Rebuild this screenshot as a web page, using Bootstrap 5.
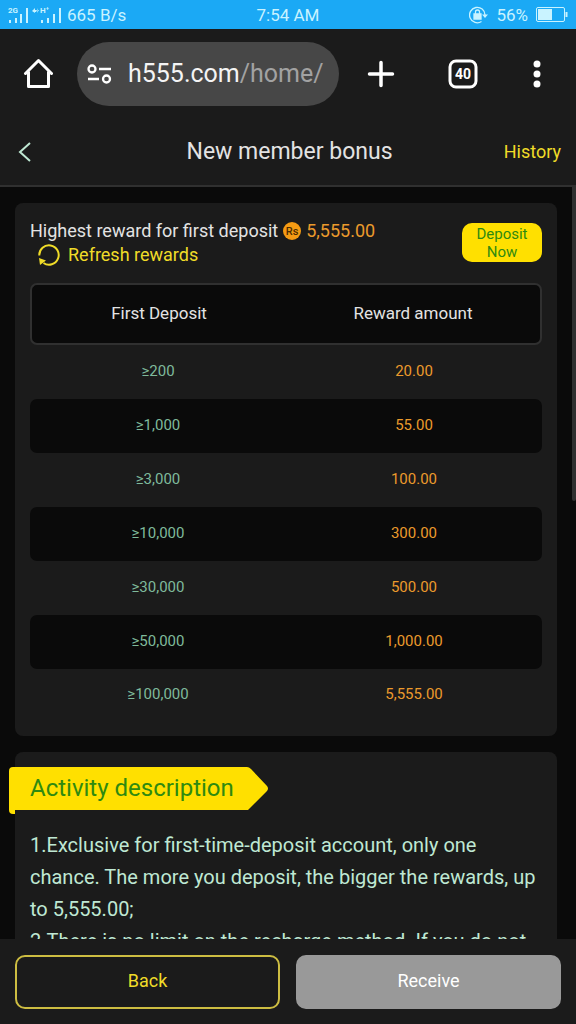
<!DOCTYPE html>
<html lang="en">
<head>
<meta charset="utf-8">
<meta name="viewport" content="width=device-width, initial-scale=1">
<title>New member bonus</title>
<link href="https://cdn.jsdelivr.net/npm/bootstrap@5.3.0/dist/css/bootstrap.min.css" rel="stylesheet">
<style>
  body { font-family: Roboto, "Noto Sans", sans-serif; background: #0a0a0a; color: #e3e3e3; font-size: 18px; line-height: 24px; }
  a, button { color: inherit; text-decoration: none; }
  .plain-btn { background: none; border: 0; padding: 0; display: flex; }
  svg { display: block; flex: none; }
  .panel { background: #1b1b1b; }
  .status-bar { background: #1ba9f5; color: #c9f3ff; font-size: 17px; height: 29px; padding: 0 8px; }
  .status-bar > div { flex: 1 1 0; }
  .browser-bar { height: 89px; padding: 0 33px 0 23px; color: #fff; }
  .address-pill { background: #474747; border: 0; border-radius: 32px; height: 64px; flex: 0 0 262px; font-size: 25px; padding: 0 10px; color: #f4f4f4; white-space: nowrap; }
  .address-pill .path { color: #a2a2a2; }
  .browser-actions { flex: 1; padding-left: 28px; }
  .page-head { height: 69px; border-bottom: 2px solid #303030; padding: 0 15px 0 18px; }
  .page-head > * { flex: 1 1 0; }
  .page-head h1 { font-size: 23px; line-height: 28px; flex: 0 0 auto; font-weight: 400; }
  .yellow { color: #f0dc28; }
  .scroll-area { overflow-y: auto; scrollbar-width: none; padding: 16px 19px 0 15px; }
  .scroll-area::-webkit-scrollbar { display: none; }
  .scroll-thumb { position: absolute; top: 0; right: 0; width: 4px; height: 314px; background: #303030; border-radius: 0 0 2px 2px; }
  .box { background: #1b1b1b; border-radius: 8px; padding: 16px 15px; }
  .orange { color: #eb9a2c; }
  .reward-line { gap: 5px; }
  .deposit-btn { background: #ffe000; color: #2f8a10; border: 0; border-radius: 10px; width: 80px; height: 39px; font-size: 15px; line-height: 18px; padding: 0 8px; }
  .reward-table { border-collapse: separate; border-spacing: 0; table-layout: fixed; font-size: 15px; text-align: center; }
  .reward-table th { font-weight: 400; font-size: 17px; height: 62px; padding: 0 0 3px; background: #0a0a0a; border: solid #303030; border-width: 2px 0; }
  .reward-table th:first-child { border-left-width: 2px; }
  .reward-table th:last-child { border-right-width: 2px; }
  .reward-table td { height: 54px; padding: 0 0 2px; }
  .reward-table tbody tr:nth-child(even) td { background: #0a0a0a; }
  .reward-table td:first-child { color: #7fba9b; }
  .reward-table td:last-child { color: #eb9a2c; }
  .reward-table tbody tr:last-child td { height: 51px; }
  .reward-table tr > :first-child { border-radius: 7px 0 0 7px; }
  .reward-table tr > :last-child { border-radius: 0 7px 7px 0; }
  .ribbon { position: relative; z-index: 0; width: 260px; height: 44px; margin: -1px 0 0 -21px; padding-left: 21px; font-size: 24px; line-height: 42px; font-weight: 400; color: #2f8a10; white-space: nowrap; }
  .ribbon svg { position: absolute; left: 0; top: 0; z-index: -1; }
  .terms { color: #bfe8d3; font-size: 20px; line-height: 32px; padding-top: 18px; }
  .footer-bar { padding: 16px 15px 15px; }
  .footer-bar .btn { height: 54px; border-radius: 10px; font-size: 18px; border-width: 2px; padding: 0 0 4px; }
  .btn-back, .btn-back:hover { color: #f0dc28; border-color: #cdbd42; }
  .btn-receive, .btn-receive:hover { background: #999; border-color: #999; color: #fff; }
</style>
</head>
<body class="vh-100 d-flex flex-column overflow-hidden">
  <div class="status-bar d-flex align-items-center flex-shrink-0">
    <div class="d-flex align-items-center gap-1">
      <svg width="55" height="18" viewBox="0 0 55 18" fill="currentColor">
        <text x="0" y="7" font-size="8" font-weight="700">2G</text>
        <path d="M1 14h2v3H1zM7 12h2v5H7zM12 8h2v9h-2zM18 2h2v15h-2z"/>
        <path d="M24 5l3-3v2h2l-1 2h-1v1zM30 2l-1 2h2l-2 3"/>
        <text x="32" y="7" font-size="8" font-weight="700">H⁺</text>
        <path d="M33 14h2v3h-2zM39 12h2v5h-2zM45 8h2v9h-2zM51 2h2v15h-2z"/>
      </svg>
      <span>665 B/s</span>
    </div>
    <span>7:54 AM</span>
    <div class="d-flex align-items-center justify-content-end gap-2">
      <svg width="19" height="18" viewBox="0 0 19 18" fill="none" stroke="currentColor" stroke-width="1.3">
        <path d="M12.500 15.500A7.700 7.700 0 1 1 16 9"/><path d="M13 8.500h6L16 12z" fill="currentColor" stroke="none"/>
        <path d="M5 8h7v5H5z" fill="currentColor"/><path d="M6.500 8V6a2 2 0 0 1 4 0v2"/>
      </svg>
      <span>56%</span>
      <svg width="32" height="16" viewBox="0 0 32 16" fill="none" stroke="currentColor"><rect x=".5" y=".5" width="28" height="14" rx="1.500"/><path d="M2 2h14v11H2z" fill="currentColor" stroke="none"/><path d="M30.500 5v5" stroke-width="2"/></svg>
    </div>
  </div>

  <nav class="browser-bar panel d-flex align-items-center flex-shrink-0" aria-label="Browser">
    <button class="plain-btn me-4" type="button" aria-label="Home">
      <svg width="30" height="31" viewBox="0 0 30 31" fill="none" stroke="#fff" stroke-width="3" stroke-linejoin="round" stroke-linecap="round"><path d="M2.500 15.500L15.500 2.500L28.500 15.500M5.500 14V28.500H25.500V14"/></svg>
    </button>
    <button class="address-pill d-flex align-items-center" type="button">
      <svg width="25" height="20" viewBox="0 0 25 20" fill="none" stroke="#fff" stroke-width="2.300"><circle cx="5" cy="5" r="3.500"/><path d="M12 5h12M1 15h11"/><circle cx="19.500" cy="15" r="3.500"/></svg>
      <span class="ms-3">h555.com<span class="path">/home/</span></span>
    </button>
    <div class="browser-actions d-flex align-items-center justify-content-between">
      <button class="plain-btn" type="button" aria-label="New tab">
        <svg width="28" height="28" viewBox="0 0 28 28" stroke="#fff" stroke-width="3.500" stroke-linecap="round"><path d="M14 2.500v23M2.500 14h23"/></svg>
      </button>
      <button class="plain-btn" type="button" aria-label="40 open tabs">
        <svg width="30" height="30" viewBox="0 0 30 30"><rect x="2" y="2" width="26" height="26" rx="6" fill="none" stroke="#fff" stroke-width="3"/><text x="15" y="20" text-anchor="middle" font-size="14" font-weight="700" fill="#fff">40</text></svg>
      </button>
      <button class="plain-btn" type="button" aria-label="Menu">
        <svg width="12" height="28" viewBox="0 0 12 28" fill="#fff"><circle cx="6" cy="4" r="3.500"/><circle cx="6" cy="14" r="3.500"/><circle cx="6" cy="24" r="3.500"/></svg>
      </button>
    </div>
  </nav>

  <header class="page-head panel d-flex align-items-center flex-shrink-0">
    <div><a class="d-flex" href="#" aria-label="Go back">
      <svg width="14" height="20" viewBox="0 0 14 20" fill="none" stroke="#bfe8d3" stroke-width="2"><path d="M12 1L2 10l10 9"/></svg>
    </a></div>
    <h1 class="m-0">New member bonus</h1>
    <div class="text-end"><a class="yellow" href="#">History</a></div>
  </header>

  <div class="position-relative d-flex flex-column flex-grow-1 overflow-hidden">
    <main class="scroll-area flex-grow-1">
      <section class="box mb-3">
        <div class="d-flex justify-content-between align-items-start">
          <div>
            <div class="reward-line d-flex align-items-center">
              <span>Highest reward for first deposit</span>
              <svg width="18" height="18" viewBox="0 0 18 18"><circle cx="9" cy="9" r="9" fill="#f59b13"/><text x="9" y="13" text-anchor="middle" font-size="11" font-weight="500" fill="#4b2b00">Rs</text></svg>
              <span class="orange">5,555.00</span>
            </div>
            <button class="plain-btn yellow align-items-center gap-2 ms-2" type="button">
              <svg width="22" height="22" viewBox="0 0 22 22" fill="none" stroke="currentColor" stroke-width="2"><path d="M1.300 11.500A9.700 9.700 0 1 1 5.500 19"/><path d="M1 14l7 2.500L2 21z" fill="currentColor" stroke="none"/></svg>
              Refresh rewards
            </button>
          </div>
          <button class="deposit-btn mt-1" type="button">Deposit Now</button>
        </div>
        <table class="reward-table w-100 mt-3">
          <thead><tr><th scope="col">First Deposit</th><th scope="col">Reward amount</th></tr></thead>
          <tbody>
            <tr><td>≥200</td><td>20.00</td></tr>
            <tr><td>≥1,000</td><td>55.00</td></tr>
            <tr><td>≥3,000</td><td>100.00</td></tr>
            <tr><td>≥10,000</td><td>300.00</td></tr>
            <tr><td>≥30,000</td><td>500.00</td></tr>
            <tr><td>≥50,000</td><td>1,000.00</td></tr>
            <tr><td>≥100,000</td><td>5,555.00</td></tr>
          </tbody>
        </table>
      </section>
      <section class="box">
        <h2 class="ribbon mb-0">
          <svg width="260" height="47" viewBox="0 0 260 47" fill="#ffe000" aria-hidden="true"><path d="M4 0H238Q240 0 242 2L258 19Q260 21.500 258 24L239 43H6V47H4Q0 47 0 43V4Q0 0 4 0Z"/></svg>
          Activity description
        </h2>
        <div class="terms">
          1.Exclusive for first-time-deposit account, only one chance. The more you deposit, the bigger the rewards, up to 5,555.00;<br>
          2.There is no limit on the recharge method. If you do not
        </div>
      </section>
    </main>
    <div class="scroll-thumb"></div>
  </div>

  <footer class="footer-bar panel d-flex gap-3 flex-shrink-0">
    <button class="btn btn-back flex-fill w-50" type="button">Back</button>
    <button class="btn btn-receive flex-fill w-50" type="button">Receive</button>
  </footer>
<script src="https://cdn.jsdelivr.net/npm/bootstrap@5.3.0/dist/js/bootstrap.bundle.min.js"></script>
</body>
</html>
